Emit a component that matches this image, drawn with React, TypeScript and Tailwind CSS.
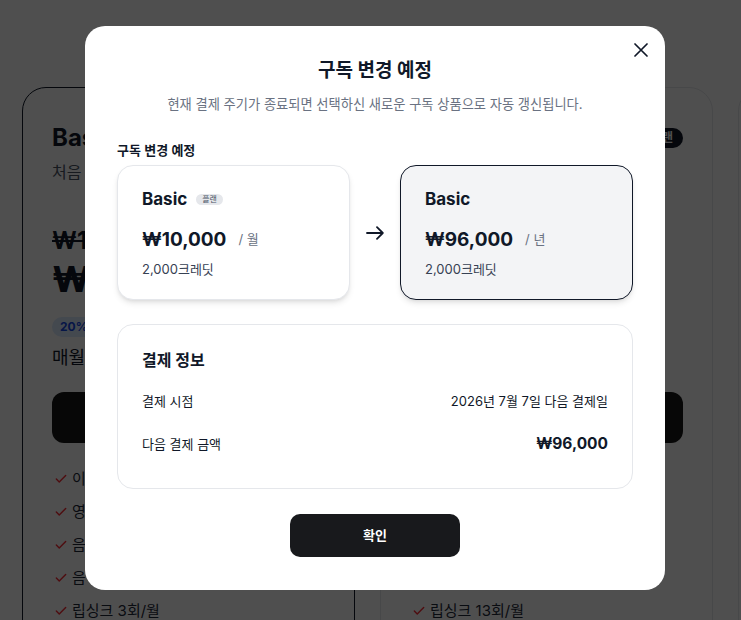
import { Check } from "lucide-react";

const basicFeatures = ["이미지 생성 20회/월", "영상 생성 5회/월", "음성 합성 10회/월", "음악 생성 5회/월", "립싱크 3회/월"];
const proFeatures = ["이미지 생성 100회/월", "영상 생성 30회/월", "음성 합성 50회/월", "음악 생성 30회/월", "립싱크 13회/월"];

function PlanCard({
  name,
  desc,
  original,
  price,
  badge,
  features,
  selected,
}: {
  name: string;
  desc: string;
  original: string;
  price: string;
  badge?: string;
  features: string[];
  selected?: boolean;
}) {
  return (
    <div
      className={`w-[333px] shrink-0 rounded-3xl border bg-white px-[29px] pt-[34px] pb-10 ${
        selected ? "border-gray-900" : "border-gray-200"
      }`}
    >
      <div className="flex items-center justify-between">
        <h3 className="text-2xl leading-8 font-bold text-gray-900">{name}</h3>
        {badge && (
          <span className="rounded-full bg-gray-900 px-2.5 py-0.5 text-xs font-semibold text-white">{badge}</span>
        )}
      </div>
      <p className="mt-[6px] text-base text-gray-600">{desc}</p>
      <p className="mt-[41px] text-2xl font-bold text-gray-900 line-through">{original}</p>
      <p className="mt-[2px] text-4xl font-extrabold text-gray-900">{price}</p>
      <span className="mt-[18px] inline-block rounded-full bg-blue-100 px-2 py-0.5 text-xs font-bold text-blue-700">
        20% 할인
      </span>
      <p className="mt-[7px] text-lg text-gray-900">매월 8,000원 결제</p>
      <button className="mt-[20px] h-[51px] w-full rounded-xl bg-neutral-900 text-base font-semibold text-white">
        구독하기
      </button>
      <ul className="mt-[24px] space-y-[9px] pl-[2px]">
        {features.map((f) => (
          <li key={f} className="flex items-center gap-1 text-[15px] leading-6 text-gray-800">
            <Check size={14} strokeWidth={2.5} className="text-red-500" />
            {f}
          </li>
        ))}
      </ul>
    </div>
  );
}

export default function App() {
  return (
    <div className="relative h-[620px] w-full overflow-hidden bg-white font-['Inter','Noto_Sans_CJK_KR',sans-serif]">
      <div className="flex gap-[25px] pt-[87px] pl-[22px]">
        <PlanCard
          name="Basic"
          desc="처음 시작하는 분께 추천"
          original="₩10,000"
          price="₩8,000"
          features={basicFeatures}
          selected
        />
        <PlanCard
          name="Pro"
          desc="전문 크리에이터용"
          original="₩30,000"
          price="₩24,000"
          badge="인기 플랜"
          features={proFeatures}
        />
        <PlanCard
          name="Max"
          desc="팀을 위한 플랜"
          original="₩60,000"
          price="₩48,000"
          features={proFeatures}
        />
      </div>

      <div className="absolute inset-0 flex items-center justify-center bg-black/[0.69] pl-[9px] pb-[4px]">
        <div className="relative w-[580px] rounded-[20px] bg-white px-8 pt-[31px] pb-[33px]">
          <button className="absolute top-[17px] right-[17px] flex h-[14px] w-[14px] items-center justify-center text-gray-900">
            <svg width="14" height="14" viewBox="0 0 14 14" fill="none" stroke="currentColor" strokeWidth="1.7" strokeLinecap="round">
              <path d="M1 1l12 12M13 1L1 13" />
            </svg>
          </button>

          <h2 className="text-center text-[19px] leading-7 font-bold text-gray-900">구독 변경 예정</h2>
          <p className="mt-[9px] text-center text-[13.25px] leading-5 text-gray-500">
            현재 결제 주기가 종료되면 선택하신 새로운 구독 상품으로 자동 갱신됩니다.
          </p>

          <p className="mt-[26px] mb-[5px] text-[13px] leading-5 font-semibold text-gray-900">구독 변경 예정</p>

          <div className="grid grid-cols-[1fr_50px_1fr] items-center">
            <div className="h-[135px] rounded-2xl border border-gray-200 bg-white px-6 pt-[23px] shadow-md">
              <div className="flex items-center gap-[9px]">
                <span className="text-[17px] leading-5 font-bold text-gray-900">Basic</span>
                <span className="rounded-full bg-gray-200 px-[6px] text-[8px] leading-[11px] text-gray-600">플랜</span>
              </div>
              <div className="mt-[17px] flex items-center">
                <span className="text-[19px] leading-7 font-bold text-gray-900">₩10,000</span>
                <span className="ml-3 text-[13px] text-gray-500">/ 월</span>
              </div>
              <p className="mt-[5px] text-[13px] leading-5 text-gray-700">2,000크레딧</p>
            </div>

            <div className="flex justify-center text-gray-900">
              <svg width="18" height="14" viewBox="0 0 18 14" fill="none" stroke="currentColor" strokeWidth="1.8" strokeLinecap="round" strokeLinejoin="round">
                <path d="M1 7h15.5M11 1.2l5.8 5.8-5.8 5.8" />
              </svg>
            </div>

            <div className="h-[135px] rounded-2xl border border-gray-900 bg-gray-100 px-6 pt-[23px] shadow-md">
              <span className="block text-[17px] leading-5 font-bold text-gray-900">Basic</span>
              <div className="mt-[17px] flex items-center">
                <span className="text-[19px] leading-7 font-bold text-gray-900">₩96,000</span>
                <span className="ml-3 text-[13px] text-gray-500">/ 년</span>
              </div>
              <p className="mt-[5px] text-[13px] leading-5 text-gray-700">2,000크레딧</p>
            </div>
          </div>

          <div className="mt-6 h-[165px] rounded-2xl border border-gray-200 px-6 pt-[23px]">
            <h3 className="text-base leading-6 font-bold text-gray-900">결제 정보</h3>
            <div className="mt-[19px] flex items-center justify-between text-[13px] leading-5 text-gray-900">
              <span>결제 시점</span>
              <span>2026년 7월 7일 다음 결제일</span>
            </div>
            <div className="mt-[23px] flex items-center justify-between text-[13px] leading-5 text-gray-900">
              <span>다음 결제 금액</span>
              <span className="text-[15.5px] font-bold">₩96,000</span>
            </div>
          </div>

          <div className="mt-[25px] flex justify-center">
            <button className="h-[43px] w-[170px] rounded-[10px] bg-[#18191c] text-[13px] font-semibold text-white">
              확인
            </button>
          </div>
        </div>
      </div>
    </div>
  );
}
